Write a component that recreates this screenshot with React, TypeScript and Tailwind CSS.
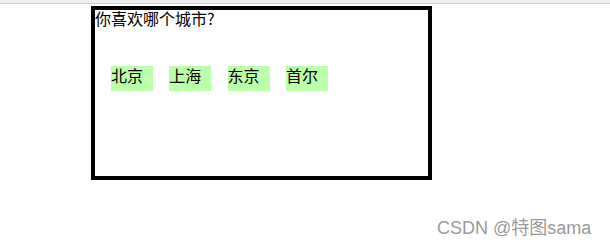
import React from "react";

const cities = ["北京", "上海", "东京", "首尔"];

export default function App() {
  return (
    <div
      className="relative w-[610px] h-[247px] bg-white overflow-hidden text-black"
      style={{ fontFamily: '"Noto Sans CJK SC", "Liberation Sans", sans-serif' }}
    >
      <div className="h-[4px] bg-[#eeeeee] border-b border-[#cfcfcf]" />
      <div className="ml-[91px] mt-[2px] w-[341px] h-[174px] border-[4px] border-black">
        <div className="text-[16px] leading-[18px] h-[20px] -mt-[1px]">你喜欢哪个城市?</div>
        <ul className="mt-[37px] pl-[16px] flex gap-[16.3px]">
          {cities.map((c) => (
            <li
              key={c}
              className="w-[42px] h-[25px] bg-[#bbffaa] text-[16px] leading-[19px]"
            >
              {c}
            </li>
          ))}
        </ul>
      </div>
      <div
        className="absolute left-[437px] top-[218px] text-[18px] leading-[20px] text-[#9a9a9a]"
        style={{ fontFamily: '"Liberation Sans", "Noto Sans CJK SC", sans-serif' }}
      >
        CSDN @特图sama
      </div>
    </div>
  );
}
